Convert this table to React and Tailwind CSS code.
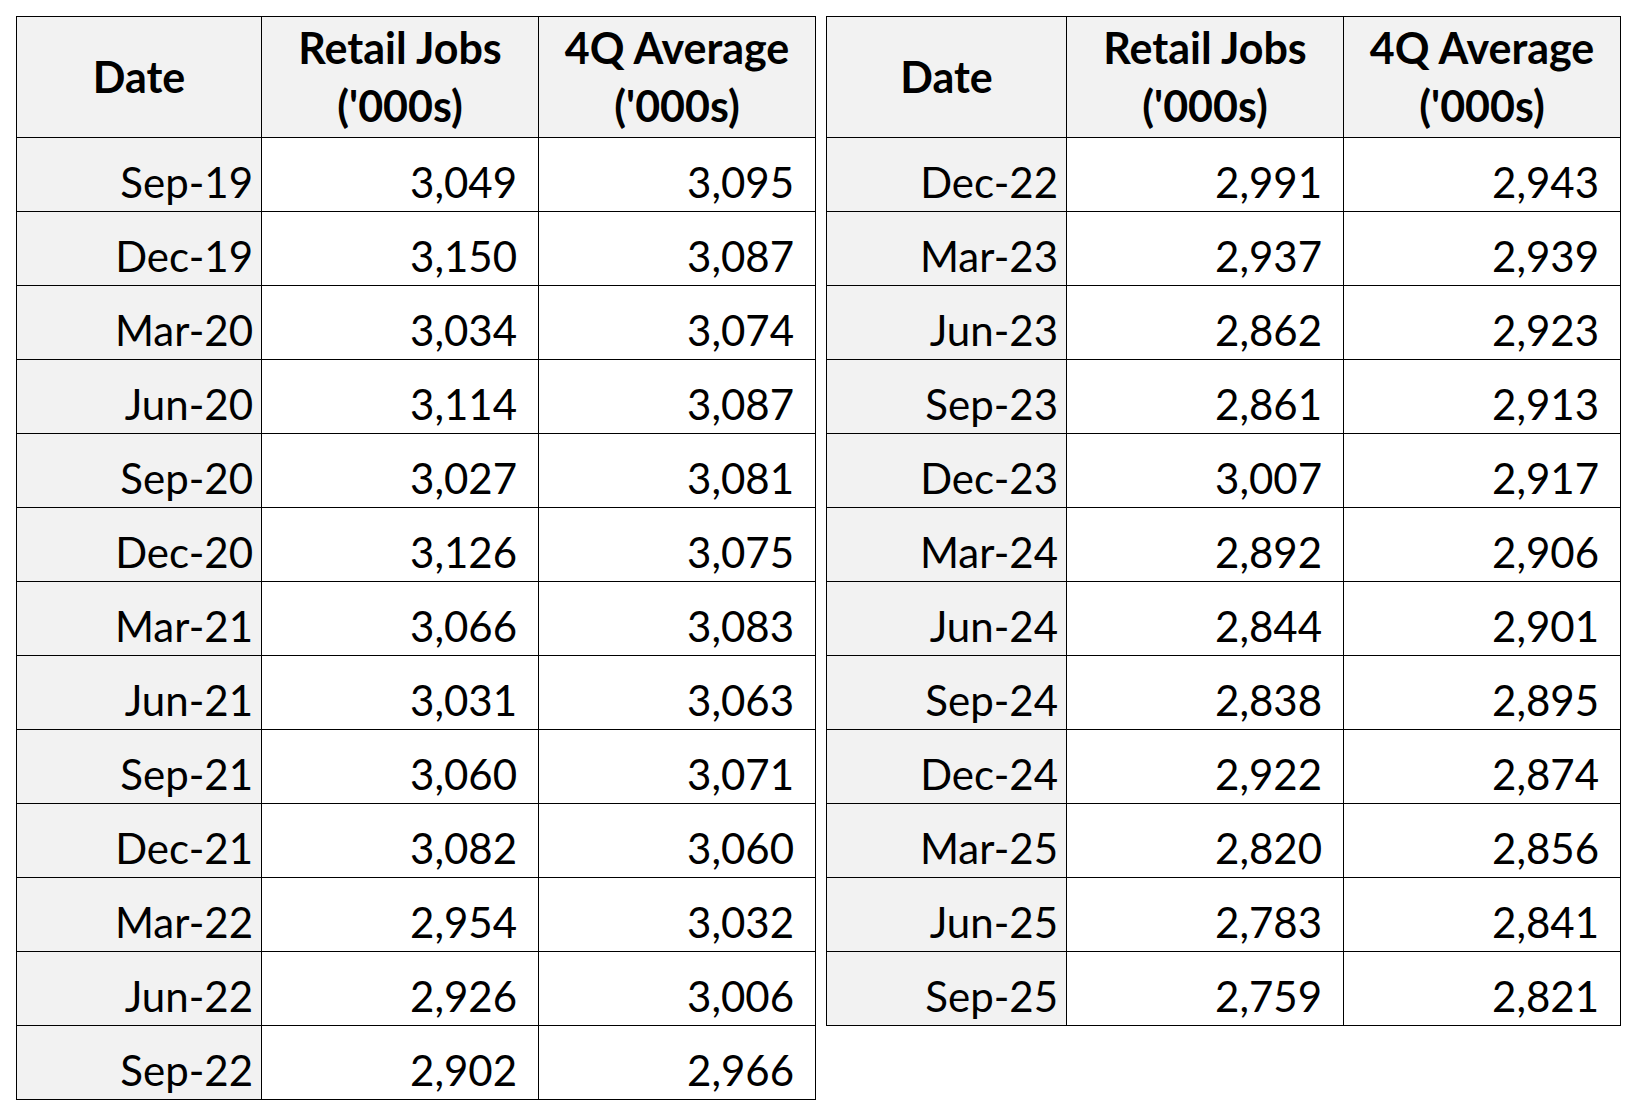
const left = [
  ["Sep-19", "3,049", "3,095"],
  ["Dec-19", "3,150", "3,087"],
  ["Mar-20", "3,034", "3,074"],
  ["Jun-20", "3,114", "3,087"],
  ["Sep-20", "3,027", "3,081"],
  ["Dec-20", "3,126", "3,075"],
  ["Mar-21", "3,066", "3,083"],
  ["Jun-21", "3,031", "3,063"],
  ["Sep-21", "3,060", "3,071"],
  ["Dec-21", "3,082", "3,060"],
  ["Mar-22", "2,954", "3,032"],
  ["Jun-22", "2,926", "3,006"],
  ["Sep-22", "2,902", "2,966"],
];

const right = [
  ["Dec-22", "2,991", "2,943"],
  ["Mar-23", "2,937", "2,939"],
  ["Jun-23", "2,862", "2,923"],
  ["Sep-23", "2,861", "2,913"],
  ["Dec-23", "3,007", "2,917"],
  ["Mar-24", "2,892", "2,906"],
  ["Jun-24", "2,844", "2,901"],
  ["Sep-24", "2,838", "2,895"],
  ["Dec-24", "2,922", "2,874"],
  ["Mar-25", "2,820", "2,856"],
  ["Jun-25", "2,783", "2,841"],
  ["Sep-25", "2,759", "2,821"],
];

function DataTable({ rows, dateW }) {
  return (
    <div className="border-t border-l border-black">
      {/* header */}
      <div className="flex">
        <div
          className={`${dateW} h-[121px] bg-[#f2f2f2] border-r border-b border-black flex items-center justify-center font-bold text-[43px] leading-[58px]`}
        >
          Date
        </div>
        <div className="w-[277px] h-[121px] bg-[#f2f2f2] border-r border-b border-black flex flex-col items-center justify-center font-bold text-[43px] leading-[58px]">
          <span>Retail Jobs</span>
          <span>('000s)</span>
        </div>
        <div className="w-[277px] h-[121px] bg-[#f2f2f2] border-r border-b border-black flex flex-col items-center justify-center font-bold text-[43px] leading-[58px]">
          <span>4Q Average</span>
          <span>('000s)</span>
        </div>
      </div>
      {rows.map((r) => (
        <div key={r[0]} className="flex text-[42px] leading-[50px]">
          <div className={`${dateW} h-[74px] bg-[#f2f2f2] border-r border-b border-black flex items-end justify-end pr-[8px] pb-[4px]`}>
            {r[0]}
          </div>
          <div className="w-[277px] h-[74px] border-r border-b border-black flex items-end justify-end pr-[21px] pb-[4px]">
            {r[1]}
          </div>
          <div className="w-[277px] h-[74px] border-r border-b border-black flex items-end justify-end pr-[21px] pb-[4px]">
            {r[2]}
          </div>
        </div>
      ))}
    </div>
  );
}

export default function App() {
  return (
    <div
      className="w-[1629px] h-[1104px] bg-white text-black pt-[16px] pl-[16px] flex items-start gap-[10px]"
      style={{ fontFamily: "Lato, 'Open Sans', sans-serif" }}
    >
      <DataTable rows={left} dateW="w-[245px]" />
      <DataTable rows={right} dateW="w-[240px]" />
    </div>
  );
}
